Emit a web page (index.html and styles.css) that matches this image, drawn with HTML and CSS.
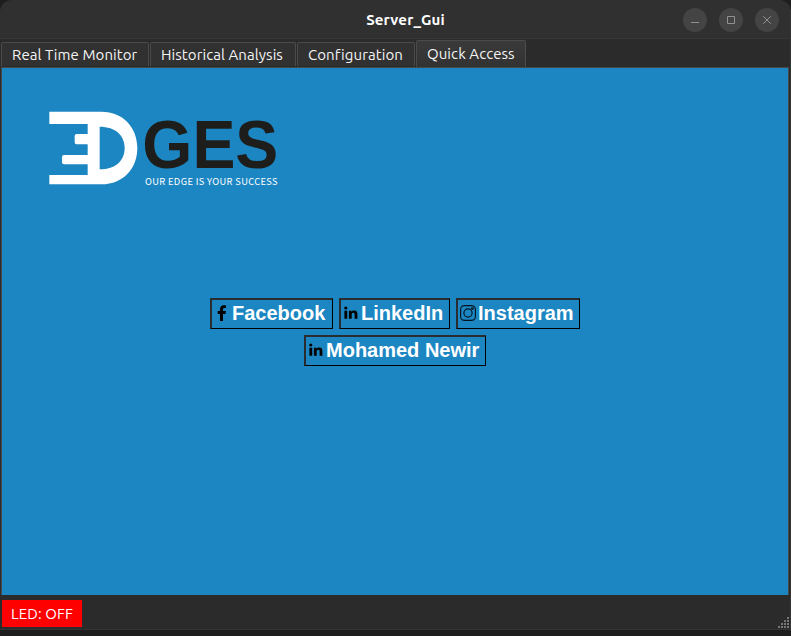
FILE: index.html
```html
<!DOCTYPE html>
<html lang="en">
<head>
<meta charset="utf-8">
<title>Server_Gui</title>
<link rel="stylesheet" href="styles.css">
</head>
<body>
<svg class="defs" aria-hidden="true">
  <symbol id="in" viewBox="0 0 16 16"><path d="M1.4 5.7h2.8v8H1.4zM5.9 5.7h2.7v1.2c.5-.9 1.4-1.4 2.7-1.4 2.4 0 3.1 1.4 3.1 3.9v4.3h-2.8V9.9c0-1.3-.1-2.2-1.4-2.2s-1.5 1-1.5 2.2v3.8H5.9z"/><circle cx="2.8" cy="3" r="1.6"/></symbol>
</svg>
<div class="window">
  <header class="titlebar">
    <h1><span>Server_Gui</span></h1>
    <div class="controls">
      <button aria-label="Minimize"><svg viewBox="0 0 24 24"><path d="M8 14.5h8"/></svg></button>
      <button aria-label="Maximize"><svg viewBox="0 0 24 24"><path d="M8.5 8.5h7v7h-7z"/></svg></button>
      <button aria-label="Close"><svg viewBox="0 0 24 24"><path d="M8.2 8.2l7.6 7.6m0-7.6l-7.6 7.6"/></svg></button>
    </div>
  </header>
  <nav class="tabs">
    <div class="tab monitor"><span>Real Time Monitor</span></div>
    <div class="tab history"><span>Historical Analysis</span></div>
    <div class="tab config"><span>Configuration</span></div>
    <div class="tab quick active"><span>Quick Access</span></div>
  </nav>
  <main class="panel">
    <svg class="logo" viewBox="0 0 750 285">
      <path fill="#fff" fill-rule="evenodd" d="M28 35H184C252 35 292 85 292 144S252 253 184 253H28V225H143V193H72Q66 193 66 187V171Q66 165 72 165H143V133H110Q104 133 104 127V108Q104 102 110 102H143V72H28ZM179 80V208C227 208 254 182 254 144S227 80 179 80Z"/>
      <text class="logo-name" x="307" y="205" textLength="408" lengthAdjust="spacingAndGlyphs">GES</text>
      <text class="logo-line" x="315" y="254" textLength="398">OUR EDGE IS YOUR SUCCESS</text>
    </svg>
    <div class="links">
      <div class="row">
        <button class="link facebook"><svg viewBox="0 0 16 16"><path d="M6 16V9H3.7V6H6V4.2C6 1.5 7.5.2 9.9.2c1 0 1.9.1 2.1.2v2.7h-1.5c-1.2 0-1.5.6-1.5 1.4V6h2.9l-.4 3H9v7z"/></svg><span>Facebook</span></button>
        <button class="link linkedin"><svg><use href="#in"/></svg><span>LinkedIn</span></button>
        <button class="link instagram"><svg viewBox="0 0 16 16" fill="none" stroke="#03151f" stroke-width="1.15"><rect x=".6" y=".6" width="14.8" height="14.8" rx="3.8"/><circle cx="8" cy="8" r="4.1"/><circle cx="12.4" cy="3.6" r=".9"/></svg><span>Instagram</span></button>
      </div>
      <div class="row">
        <button class="link newir"><svg><use href="#in"/></svg><span>Mohamed Newir</span></button>
      </div>
    </div>
  </main>
  <footer class="status">
    <div class="led"><span>LED: OFF</span></div>
    <svg class="grip" viewBox="0 0 12 12"><path d="M9 0h2v2H9zM6 3h2v2H6zM9 3h2v2H9zM3 6h2v2H3zM6 6h2v2H6zM9 6h2v2H9zM0 9h2v2H0zM3 9h2v2H3zM6 9h2v2H6zM9 9h2v2H9z"/></svg>
  </footer>
</div>
</body>
</html>
```

FILE: styles.css
```css
* { box-sizing: border-box; }
body {
  margin: 0;
  height: 636px;
  overflow: hidden;
  background: #1e1e1e;
  color: #fff;
  font: 15px/18px Ubuntu, "Noto Sans", sans-serif;
}
button { font: inherit; color: inherit; padding: 0; }
.defs { display: none; }
.window {
  width: 791px;
  height: 630px;
  display: flex;
  flex-direction: column;
  background: #2b2b2b;
  border-right: 1px solid #353535;
  border-radius: 12px 12px 0 0;
  overflow: hidden;
}
.titlebar {
  height: 39px;
  flex: none;
  display: grid;
  grid-template-columns: 1fr auto 1fr;
  align-items: center;
  padding: 0 11px 0 32px;
  background: #303030;
  border-bottom: 1px solid #373737;
}
h1 { grid-column: 2; margin: 0; font-size: 15px; line-height: 20px; padding-top: 2px; }
h1 span { letter-spacing: .15px; }
.controls { display: flex; justify-content: flex-end; gap: 12px; padding-top: 1px; }
.controls button { width: 24px; height: 24px; border: 0; border-radius: 50%; background: #444; }
.controls svg { display: block; width: 24px; height: 24px; fill: none; stroke: #919191; }
.tabs { height: 28px; flex: none; display: flex; align-items: flex-end; gap: 1px; padding-left: 1px; }
.tab {
  height: 24px;
  padding: 3px 0 0 10px;
  margin-bottom: 1px;
  white-space: nowrap;
  background: #313131;
  border: 1px solid #4b4b4b;
  border-bottom: 0;
  border-radius: 2px 2px 0 0;
  color: #f4f4f4;
  letter-spacing: .08px;
}
.active { height: 27px; margin-bottom: 0; padding-top: 4px; background: linear-gradient(#3a3a3a, #323232); }
.monitor { width: 148px; }
.history { width: 146px; }
.config { width: 118px; }
.quick { width: 110px; }
.panel {
  width: 788px;
  height: 528px;
  margin-left: 1px;
  flex: none;
  background: #1c86c2;
  border: 1px solid #484848;
  border-width: 1px 1px 0;
  padding: 32px 0 0 38px;
}
.logo { display: block; width: 250px; height: 95px; }
.logo-name { font: bold 206px "Liberation Sans", Arial, sans-serif; fill: #1d1d1b; }
.logo-line { font: 28px "Noto Sans CJK SC", "Noto Sans", sans-serif; fill: #fff; }
.links { margin: 103px 0 0 -39px; display: flex; flex-direction: column; gap: 6px; }
.row { display: flex; justify-content: center; gap: 6px; }
.link {
  height: 31px;
  display: flex;
  align-items: center;
  padding: 0 0 2px 2px;
  gap: 2.5px;
  background: transparent;
  border-style: solid;
  border-color: #2a2d2f #000 #000 #2a2d2f;
  border-width: 2px 1px 1px 2px;
  font: bold 20px/24px "Liberation Sans", Arial, sans-serif;
  white-space: nowrap;
}
.link svg { width: 16px; height: 16px; flex: none; }
.facebook { width: 123px; }
.linkedin { width: 111px; }
.instagram { width: 124px; }
.newir { width: 182px; }
.status { flex: 1; display: flex; justify-content: space-between; align-items: flex-start; padding: 5px 0 0 2px; border-bottom: 1px solid #343434; }
.led { width: 80px; height: 27px; padding: 5px 0 0 9px; background: #f00; font-size: 15px; letter-spacing: .1px; }
.grip { width: 12px; height: 12px; margin-top: 17px; fill: #777; }
```
